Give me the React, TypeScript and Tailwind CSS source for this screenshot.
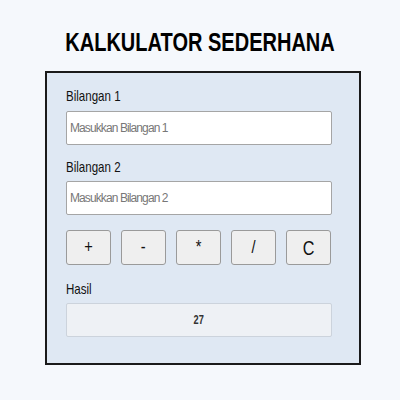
import React from "react";

const ops = ["+", "-", "*", "/", "C"];

function Narrow({ children, center }: { children: React.ReactNode; center?: boolean }) {
  return (
    <span className={`inline-block scale-x-[0.77] ${center ? "origin-center" : "origin-left"}`}>{children}</span>
  );
}

export default function App() {
  return (
    <div
      className="w-[400px] h-[400px] bg-[#f5f8fc] pt-[27px]"
      style={{ fontFamily: '"Liberation Sans", Arial, sans-serif' }}
    >
      <h1 className="text-center font-bold text-[26px] leading-[30px] text-black">
        <Narrow center>KALKULATOR SEDERHANA</Narrow>
      </h1>
      <div className="mt-[14px] ml-[45px] w-[316px] h-[294px] border-2 border-[#1a1a1a] bg-[#dfe8f3] px-[19px] pt-[14px]">
        <label className="block text-[15px] leading-[18px] text-[#111]">
          <Narrow>Bilangan 1</Narrow>
        </label>
        <input
          className="mt-[6px] block w-[266px] h-[34px] bg-white border border-[#a5a5a5] rounded-[2px] px-[3px] text-[12px] tracking-[-0.9px] placeholder:text-[#777] outline-none"
          placeholder="Masukkan Bilangan 1"
        />
        <label className="block mt-[13px] text-[15px] leading-[18px] text-[#111]">
          <Narrow>Bilangan 2</Narrow>
        </label>
        <input
          className="mt-[5px] block w-[266px] h-[34px] bg-white border border-[#a5a5a5] rounded-[2px] px-[3px] text-[12px] tracking-[-0.9px] placeholder:text-[#777] outline-none"
          placeholder="Masukkan Bilangan 2"
        />
        <div className="mt-[15px] flex gap-[10px] w-[266px]">
          {ops.map((o) => (
            <button
              key={o}
              className={`w-[45px] h-[35px] bg-[#efefef] border border-[#9a9a9a] rounded-[3px] text-[#111] ${o === "C" ? "text-[21px]" : "text-[19px]"}`}
            >
              <Narrow center>{o}</Narrow>
            </button>
          ))}
        </div>
        <div className="mt-[15px] text-[15px] leading-[18px] text-[#111]">
          <Narrow>Hasil</Narrow>
        </div>
        <div className="mt-[5px] w-[266px] h-[34px] bg-[#eef1f5] border border-[#ccd3dc] rounded-[2px] flex items-center justify-center text-[12px] font-bold text-[#333]">
          <Narrow center>27</Narrow>
        </div>
      </div>
    </div>
  );
}
